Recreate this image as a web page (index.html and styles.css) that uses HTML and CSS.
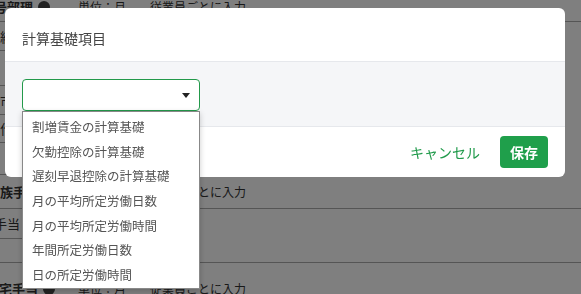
FILE: index.html
```html
<!DOCTYPE html>
<html lang="ja">
<head>
    <meta charset="UTF-8">
    <meta name="viewport" content="width=device-width, initial-scale=1.0">
    <title>計算基礎項目</title>
    <link rel="stylesheet" href="styles.css">
</head>
<body>
    <!-- 背景の手当一覧 -->
    <div class="page">
        <div class="row row-top">
            <span class="name">扶養号部理 <i class="dot"></i></span>
            <span class="unit">単位：月</span>
            <span class="input">従業員ごとに入力</span>
        </div>
        <div class="row sub h29">級</div>
        <div class="row sub h35"></div>
        <div class="row sub h29">市</div>
        <div class="row sub h28">作</div>
        <div class="row sub h32"></div>
        <div class="row row-mid">
            <span class="name">家族手当</span>
            <span class="input">従業員ごとに入力</span>
        </div>
        <div class="row sub wide h30">手当</div>
        <div class="row full h24"></div>
        <div class="row row-bottom">
            <span class="name">住宅手当 <i class="dot"></i></span>
            <span class="unit">単位：月</span>
            <span class="input">従業員ごとに入力</span>
        </div>
    </div>

    <div class="overlay">
        <div class="modal">
            <div class="modal-header">計算基礎項目</div>
            <div class="modal-body">
                <div class="select">
                    <div class="select-box">
                        <span class="caret"></span>
                    </div>
                    <ul class="options">
                        <li>割増賃金の計算基礎</li>
                        <li>欠勤控除の計算基礎</li>
                        <li>遅刻早退控除の計算基礎</li>
                        <li>月の平均所定労働日数</li>
                        <li>月の平均所定労働時間</li>
                        <li>年間所定労働日数</li>
                        <li>日の所定労働時間</li>
                    </ul>
                </div>
            </div>
            <div class="modal-footer">
                <button class="btn-cancel">キャンセル</button>
                <button class="btn-save">保存</button>
            </div>
        </div>
    </div>
</body>
</html>
```

FILE: styles.css
```css
body{
    margin: 0;
    height: 294px;
    font-family: "Noto Sans CJK JP", "Noto Sans", sans-serif;
    color: #333;
    background: #fff;
    overflow: hidden;
}
.page{
    margin-top: -9px;
    height: 303px;
    overflow: hidden;
}
.row{
    display: flex;
    align-items: center;
    box-sizing: border-box;
    font-size: 12px;
    border-bottom: 1px solid #aaa;
    margin-left: -6px;
}
.row span{
    flex-shrink: 0;
    white-space: nowrap;
}
.row .name{
    font-size: 13px;
    font-weight: bold;
}
.row-top{
    height: 31px;
}
.row-top .name{
    margin-left: -26px;
    width: 110px;
}
.row-mid{
    height: 34px;
}
.row-mid .name{
    margin-left: -7px;
    width: 163px;
}
.row-bottom{
    height: 50px;
    border-bottom: none;
}
.row-bottom .name{
    margin-left: -8px;
    width: 92px;
}
.row .unit{
    width: 72px;
}
.sub{
    width: 28px;
    padding-left: 6px;
    overflow: hidden;
    white-space: nowrap;
    font-size: 13px;
}
.sub.wide{
    width: 72px;
    padding-left: 0;
    margin-left: -6px;
}
.h24{ height: 24px; }
.h28{ height: 28px; }
.h29{ height: 29px; }
.h30{ height: 30px; }
.h32{ height: 32px; }
.h35{ height: 35px; }
.full{
    width: auto;
}
.dot{
    display: inline-block;
    width: 12px;
    height: 12px;
    border-radius: 50%;
    background: #444;
    vertical-align: -1px;
    margin-left: 2px;
}
.overlay{
    position: fixed;
    inset: 0;
    background: rgba(0, 0, 0, 0.5);
    padding: 8px 16px 0 5px;
}
.modal{
    width: 560px;
    background: #fff;
    border-radius: 6px;
}
.modal-header{
    height: 54px;
    box-sizing: border-box;
    padding: 20px 17px 0;
    font-size: 14px;
    color: #444;
    border-bottom: 1px solid #e6e8ec;
}
.modal-body{
    height: 65px;
    box-sizing: border-box;
    background: #f5f6f8;
    padding: 17px 17px 0;
    border-bottom: 1px solid #e6e8ec;
}
.select{
    position: relative;
    width: 178px;
}
.select-box{
    height: 32px;
    box-sizing: border-box;
    border: 1px solid #23994a;
    border-radius: 4px;
    background: #fff;
    display: flex;
    align-items: center;
    justify-content: flex-end;
    padding-right: 9px;
}
.caret{
    width: 0;
    height: 0;
    border-left: 4px solid transparent;
    border-right: 4px solid transparent;
    border-top: 5px solid #222;
}
.options{
    position: absolute;
    top: 32px;
    left: 0;
    width: 178px;
    box-sizing: border-box;
    margin: 0;
    padding: 2px 0 1px;
    list-style: none;
    background: #fff;
    border: 1px solid #888;
    box-shadow: 0 2px 6px rgba(0, 0, 0, 0.2);
    z-index: 2;
}
.options li{
    height: 24.7px;
    line-height: 25px;
    padding-left: 9px;
    font-size: 12.5px;
    color: #555;
    white-space: nowrap;
}
.modal-footer{
    height: 50px;
    display: flex;
    justify-content: flex-end;
    align-items: center;
    gap: 20px;
    padding-right: 17px;
}
.modal-footer button{
    font-family: inherit;
    font-size: 14px;
    border: none;
    cursor: pointer;
}
.btn-cancel{
    background: none;
    color: #1f9a4a;
    padding: 0;
}
.btn-save{
    width: 48px;
    height: 32px;
    border-radius: 4px;
    background: #1f9f4b;
    color: #fff;
    font-weight: bold;
}
```
